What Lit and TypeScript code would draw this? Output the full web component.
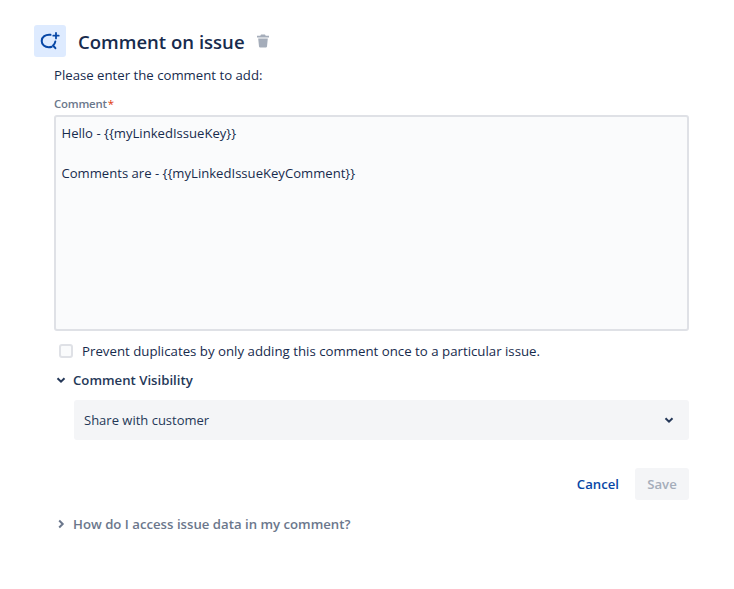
import { LitElement, html, css } from "lit";
import { customElement } from "lit/decorators.js";

@customElement("app-root")
export class AppRoot extends LitElement {
  static styles = css`
    :host { display: block; width: 734px; height: 589px; background: #fff; font-family: "Open Sans", "Noto Sans", sans-serif; color: #172b4d; font-size: 13.25px; }
    .page { padding: 25px 45px 0 34px; display: flex; flex-direction: column; }
    .head { display: flex; align-items: center; height: 32px; }
    .badge { width: 32px; height: 32px; border-radius: 3px; background: #deebff; display: flex; align-items: center; justify-content: center; }
    h1 { margin: 2px 0 0 12px; font-size: 18.55px; font-weight: 600; line-height: 32px; color: #172b4d; }
    .trash { margin: 0 0 0 10px; display: block; }
    .body { padding-left: 20px; display: flex; flex-direction: column; }
    .intro { margin-top: 8px; line-height: 20px; height: 20px; font-size: 13.2px; }
    .label { margin-top: 11px; font-size: 11.4px; font-weight: 600; color: #6b778c; line-height: 16px; height: 16px; letter-spacing: -0.2px; display: flex; }
    .req { color: #de350b; margin-left: 1px; font-weight: 400; }
    .ta { margin-top: 3px; box-sizing: border-box; height: 216px; border: 2px solid #dfe1e6; border-radius: 3px; background: #fafbfc; padding: 6px 6px 6px 5.5px; line-height: 20px; font-size: 13.1px; white-space: pre-wrap; }
    .check { margin-top: 10px; display: flex; align-items: center; height: 20px; padding-left: 5px; }
    .box { box-sizing: border-box; width: 14px; height: 14px; border: 2px solid #dfe1e6; border-radius: 3px; background: #fafbfc; margin-right: 9px; flex: none; }
    .toggle { display: flex; align-items: center; font-weight: 600; line-height: 20px; height: 20px; font-size: 13.2px; }
    .toggle svg { width: 10px; height: 10px; margin-right: 7px; flex: none; }
    .toggle.vis { margin-top: 9px; padding-left: 2px; color: #253858; }
    .select { margin: 10px 0 0 20px; height: 40px; border-radius: 3px; background: #f4f5f7; display: flex; align-items: center; justify-content: space-between; padding: 0 15px 0 10px; color: #253858; font-size: 13px; }
    .select svg { width: 10px; height: 10px; display: block; }
    .actions { margin-top: 28px; display: flex; justify-content: flex-end; align-items: center; gap: 16px; }
    .btn { font-weight: 600; line-height: 32px; height: 32px; font-size: 13.2px; }
    .cancel { color: #0747a6; }
    .save { background: #f4f5f7; color: #a5adba; border-radius: 3px; width: 54px; text-align: center; }
    .toggle.help { margin-top: 14px; padding-left: 2px; color: #6b778c; }
  `;

  render() {
    const down = html`<svg viewBox="0 0 10 10"><path d="M1.500 3.200 5 6.700l3.500-3.500" fill="none" stroke="currentColor" stroke-width="2"/></svg>`;
    const right = html`<svg viewBox="0 0 10 10"><path d="M3.200 1.500 6.700 5 3.200 8.500" fill="none" stroke="currentColor" stroke-width="2"/></svg>`;
    return html`
      <div class="page">
        <div class="head">
          <div class="badge">
            <svg width="24" height="24" viewBox="0 0 24 24" fill="none">
              <path d="M12.500 5.800C7.500 5.200 3.700 8 3.700 12c0 3.800 3.300 6.300 7 6.300 1 0 2-.1 3-.5" stroke="#0747a6" stroke-width="2" stroke-linecap="round"/>
              <path d="M17.300 12.500c-.2 1.700-1 3-2.300 4l2.400 2.700" stroke="#0747a6" stroke-width="2" stroke-linecap="round" stroke-linejoin="round"/>
              <path d="M18 4v5.400M15.300 6.700h5.400" stroke="#0747a6" stroke-width="1.800" stroke-linecap="round"/>
            </svg>
          </div>
          <h1>Comment on issue</h1>
          <svg class="trash" width="16" height="16" viewBox="0 0 16 16" fill="#a5adba">
            <path d="M6 1.500h4l.7 1.300H14v1.700H2V2.800h3.300z"/>
            <path d="M3.200 5.500h9.600l-.8 8a1.200 1.200 0 0 1-1.200 1H5.200A1.200 1.200 0 0 1 4 13.500z"/>
          </svg>
        </div>
        <div class="body">
          <div class="intro">Please enter the comment to add:</div>
          <div class="label">Comment<span class="req">*</span></div>
          <div class="ta">Hello - {{myLinkedIssueKey}}

Comments are - {{myLinkedIssueKeyComment}}</div>
          <div class="check"><span class="box"></span>Prevent duplicates by only adding this comment once to a particular issue.</div>
          <div class="toggle vis">${down}Comment Visibility</div>
          <div class="select"><span>Share with customer</span>${down}</div>
          <div class="actions">
            <span class="btn cancel">Cancel</span>
            <span class="btn save">Save</span>
          </div>
          <div class="toggle help">${right}How do I access issue data in my comment?</div>
        </div>
      </div>
    `;
  }
}
